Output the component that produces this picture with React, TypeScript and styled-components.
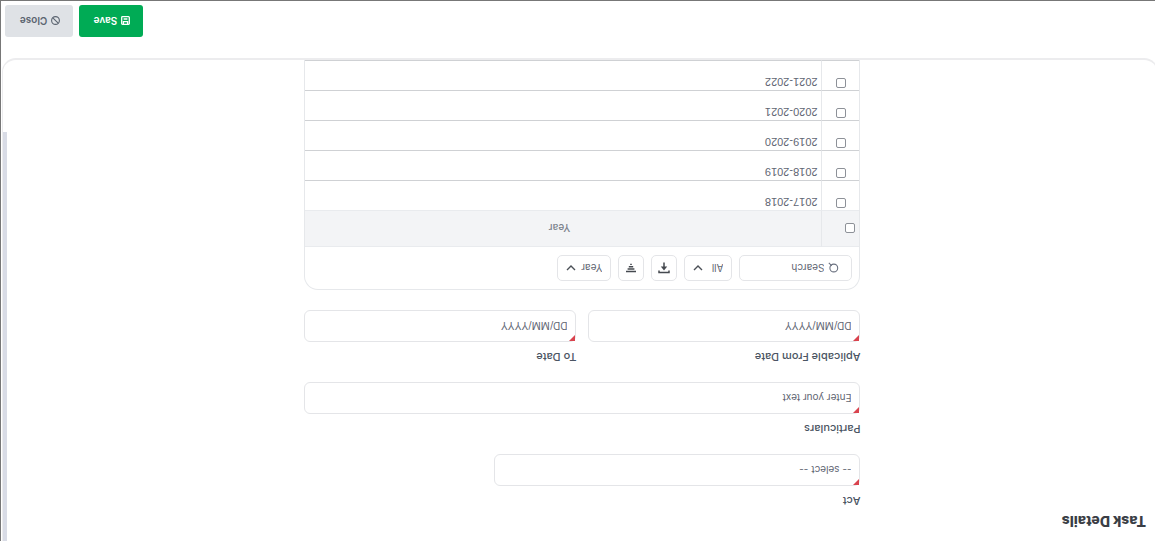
import React from 'react';
import styled, { createGlobalStyle } from 'styled-components';

const GlobalStyle = createGlobalStyle`
  *, *::before, *::after { box-sizing: border-box; }
  body {
    margin: 0;
    background: #fff;
    overflow: hidden;
  }
  body, button, input, select {
    font-family: Inter, "Liberation Sans", sans-serif;
  }
`;

const Page = styled.main`
  display: flex;
  flex-direction: column;
  height: 100vh;
  border-right: 1px solid #777;
  border-bottom: 1px solid #777;
  background: #fff;
  color: #4b5563;
  transform: rotate(180deg);
`;

const Panel = styled.section`
  position: relative;
  flex: 1;
  min-height: 0;
  margin: 0 1px 0 -3px;
  padding: 12px 16px 0 11px;
  overflow: hidden;
  border: solid #ececee;
  border-width: 0 1px 2px;
  border-radius: 0 0 14px 14px;
`;

const ScrollThumb = styled.div`
  position: absolute;
  top: 0;
  right: 0;
  width: 4px;
  height: 85%;
  background: #d9dce6;
`;

const Title = styled.h1`
  margin: 0;
  font-size: 14px;
  line-height: 16px;
  font-weight: 800;
  color: #3a3e45;
`;

const Form = styled.form`
  display: flex;
  flex-direction: column;
  gap: 17px;
  width: 100%;
  max-width: 556px;
  margin: 4px auto 0;
`;

const Row = styled.div`
  display: flex;
  gap: 12px;
`;

const Field = styled.div<{ $width?: string }>`
  display: flex;
  flex-direction: column;
  gap: 7px;
  width: ${({ $width }) => $width ?? '100%'};
`;

const Label = styled.label`
  font-size: 11px;
  line-height: 16px;
  font-weight: 500;
  color: #4b5563;
`;

const Required = styled.span`
  position: relative;
  display: block;

  &::before {
    content: '';
    position: absolute;
    top: 1px;
    left: 1px;
    border-top: 6px solid #d9434e;
    border-right: 6px solid transparent;
  }
`;

const controlStyle = `
  display: block;
  width: 100%;
  height: 32px;
  padding: 0 8px;
  border: 1px solid #e4e5e8;
  border-radius: 6px;
  background: #fff;
  font-size: 10px;
  font-weight: 400;
  color: #5f6673;
  outline: none;
`;

const TextInput = styled.input`
  ${controlStyle}
  &::placeholder { color: #5f6673; opacity: 1; }
`;

const SelectInput = styled.select`
  ${controlStyle}
  appearance: none;
`;

const Card = styled.div`
  margin-top: 3px;
  border: 1px solid #e6e8eb;
  border-bottom: 0;
  border-radius: 14px 14px 0 0;
  overflow: hidden;
`;

const Toolbar = styled.div`
  display: flex;
  gap: 7px;
  padding: 8px 7px;
`;

const ToolBox = styled.div<{ $width: number; $inset?: number }>`
  display: flex;
  align-items: center;
  gap: 4px;
  width: ${({ $width }) => $width}px;
  height: 26px;
  padding: 0 8px 0 ${({ $inset }) => $inset ?? 8}px;
  border: 1px solid #e4e5e8;
  border-radius: 5px;
`;

const SearchInput = styled.input`
  flex: 1;
  min-width: 0;
  padding: 0;
  border: 0;
  outline: none;
  font-size: 10px;
  &::placeholder { color: #5f6673; opacity: 1; }
`;

const ToolSelect = styled.select`
  flex: 1;
  min-width: 0;
  padding: 0;
  border: 0;
  outline: none;
  appearance: none;
  background: none;
  font-size: 10px;
  color: #5f6673;
`;

const IconButton = styled.button`
  display: flex;
  align-items: center;
  justify-content: center;
  width: 26px;
  height: 26px;
  padding: 0;
  border: 1px solid #e4e5e8;
  border-radius: 5px;
  background: #fff;
  color: #45494f;
`;

const Table = styled.table`
  width: 100%;
  border-collapse: separate;
  border-spacing: 0;
  table-layout: fixed;
`;

const HeadCell = styled.th<{ $narrow?: boolean }>`
  width: ${({ $narrow }) => ($narrow ? '38px' : 'auto')};
  height: 37px;
  padding: ${({ $narrow }) => ($narrow ? '0 4px' : '0 4px 0 12px')};
  border-top: 1px solid #e9ebee;
  border-bottom: 1px solid #e9ebee;
  border-right: ${({ $narrow }) => ($narrow ? '1px solid #e6e8eb' : '0')};
  background: #f3f4f6;
  font-size: 10px;
  font-weight: 500;
  color: #7b828c;
  text-align: ${({ $narrow }) => ($narrow ? 'left' : 'center')};
`;

const Cell = styled.td<{ $narrow?: boolean }>`
  height: 30px;
  padding: ${({ $narrow }) => ($narrow ? '2px 0 0 13px' : '0 4px')};
  border-bottom: 1px solid #cfd1d4;
  border-right: ${({ $narrow }) => ($narrow ? '1px solid #e6e8eb' : '0')};
  vertical-align: top;
  font-family: "Liberation Sans", sans-serif;
  font-size: 11px;
  line-height: 16px;
  color: #5f6673;
`;

const Check = styled.input`
  display: block;
  appearance: none;
  width: 10px;
  height: 10px;
  margin: 0;
  border: 1px solid #8d9198;
  border-radius: 2px;
  background: #fff;
`;

const Footer = styled.footer`
  display: flex;
  justify-content: flex-end;
  gap: 6px;
  padding: 21px 4px 4px;
`;

const Action = styled.button<{ $primary?: boolean }>`
  display: flex;
  align-items: center;
  justify-content: center;
  gap: 4px;
  width: ${({ $primary }) => ($primary ? 64 : 68)}px;
  height: 32px;
  padding: 0 2px 0 0;
  border: 0;
  border-radius: 3px;
  background: ${({ $primary }) => ($primary ? '#00ab55' : '#dfe2e6')};
  color: ${({ $primary }) => ($primary ? '#fff' : '#5b6470')};
  font-size: 10px;
  font-weight: 600;
`;

const Chevron = () => (
  <svg width="10" height="10" viewBox="0 0 10 10" fill="none" stroke="#4b5057" strokeWidth="1.4">
    <path d="M1 3l4 4 4-4" />
  </svg>
);

const SearchIcon = () => (
  <svg width="11" height="11" viewBox="0 0 11 11" fill="none" stroke="#6b7280" strokeWidth="1.1">
    <circle cx="5.2" cy="5" r="3.9" />
    <path d="M7.2 7.2l3 3" />
  </svg>
);

const ExportIcon = () => (
  <svg width="12" height="12" viewBox="0 0 12 12" fill="none" stroke="currentColor" strokeWidth="1.5">
    <path d="M1 3.6V1.4h10v2.2M6 11.5V5" />
    <path d="M2.8 7.4L6 3.6l3.2 3.8z" fill="currentColor" stroke="none" />
  </svg>
);

const FilterIcon = () => (
  <svg width="12" height="10" viewBox="0 0 12 10" fill="none" stroke="currentColor" strokeWidth="1.4">
    <path d="M1 1.5h10M2.6 4h6.8M3.8 6.3h4.4M5.2 8.6h1.6" />
  </svg>
);

const SaveIcon = () => (
  <svg width="9" height="9" viewBox="0 0 9 9" fill="none" stroke="currentColor" strokeWidth="1.3">
    <path d="M.7 1.5q0-.8.8-.8h6q.8 0 .8.8v6q0 .8-.8.8h-6q-.8 0-.8-.8z" />
    <path d="M2.4 1v2.4h4.2V1M2.6 6h3.8" />
  </svg>
);

const CloseIcon = () => (
  <svg width="9" height="9" viewBox="0 0 9 9" fill="none" stroke="currentColor" strokeWidth="1.1">
    <circle cx="4.5" cy="4.5" r="3.9" />
    <path d="M1.8 1.8l5.4 5.4" />
  </svg>
);

const years = ['2017-2018', '2018-2019', '2019-2020', '2020-2021', '2021-2022'];

export default function App() {
  return (
    <>
      <GlobalStyle />
      <Page>
        <Panel>
          <Title>Task Details</Title>
          <Form>
            <Field $width="66%">
              <Label htmlFor="act">Act</Label>
              <Required>
                <SelectInput id="act">
                  <option>-- select --</option>
                </SelectInput>
              </Required>
            </Field>
            <Field>
              <Label htmlFor="particulars">Particulars</Label>
              <Required>
                <TextInput id="particulars" placeholder="Enter your text" />
              </Required>
            </Field>
            <Row>
              <Field>
                <Label htmlFor="from">Aplicable From Date</Label>
                <Required>
                  <TextInput id="from" placeholder="DD/MM/YYYY" />
                </Required>
              </Field>
              <Field>
                <Label htmlFor="to">To Date</Label>
                <Required>
                  <TextInput id="to" placeholder="DD/MM/YYYY" />
                </Required>
              </Field>
            </Row>
            <Card>
              <Toolbar>
                <ToolBox $width={113} $inset={12}>
                  <SearchIcon />
                  <SearchInput aria-label="Search" placeholder="Search" />
                </ToolBox>
                <ToolBox $width={48}>
                  <ToolSelect aria-label="Filter by column">
                    <option>All</option>
                  </ToolSelect>
                  <Chevron />
                </ToolBox>
                <IconButton type="button" aria-label="Export">
                  <ExportIcon />
                </IconButton>
                <IconButton type="button" aria-label="Filter">
                  <FilterIcon />
                </IconButton>
                <ToolBox $width={54}>
                  <ToolSelect aria-label="Group by">
                    <option>Year</option>
                  </ToolSelect>
                  <Chevron />
                </ToolBox>
              </Toolbar>
              <Table>
                <thead>
                  <tr>
                    <HeadCell $narrow>
                      <Check type="checkbox" aria-label="Select all years" />
                    </HeadCell>
                    <HeadCell>Year</HeadCell>
                  </tr>
                </thead>
                <tbody>
                  {years.map((year) => (
                    <tr key={year}>
                      <Cell $narrow>
                        <Check type="checkbox" aria-label={year} />
                      </Cell>
                      <Cell>{year}</Cell>
                    </tr>
                  ))}
                </tbody>
              </Table>
            </Card>
          </Form>
          <ScrollThumb />
        </Panel>
        <Footer>
          <Action type="button" $primary>
            <SaveIcon />
            Save
          </Action>
          <Action type="button">
            <CloseIcon />
            Close
          </Action>
        </Footer>
      </Page>
    </>
  );
}
